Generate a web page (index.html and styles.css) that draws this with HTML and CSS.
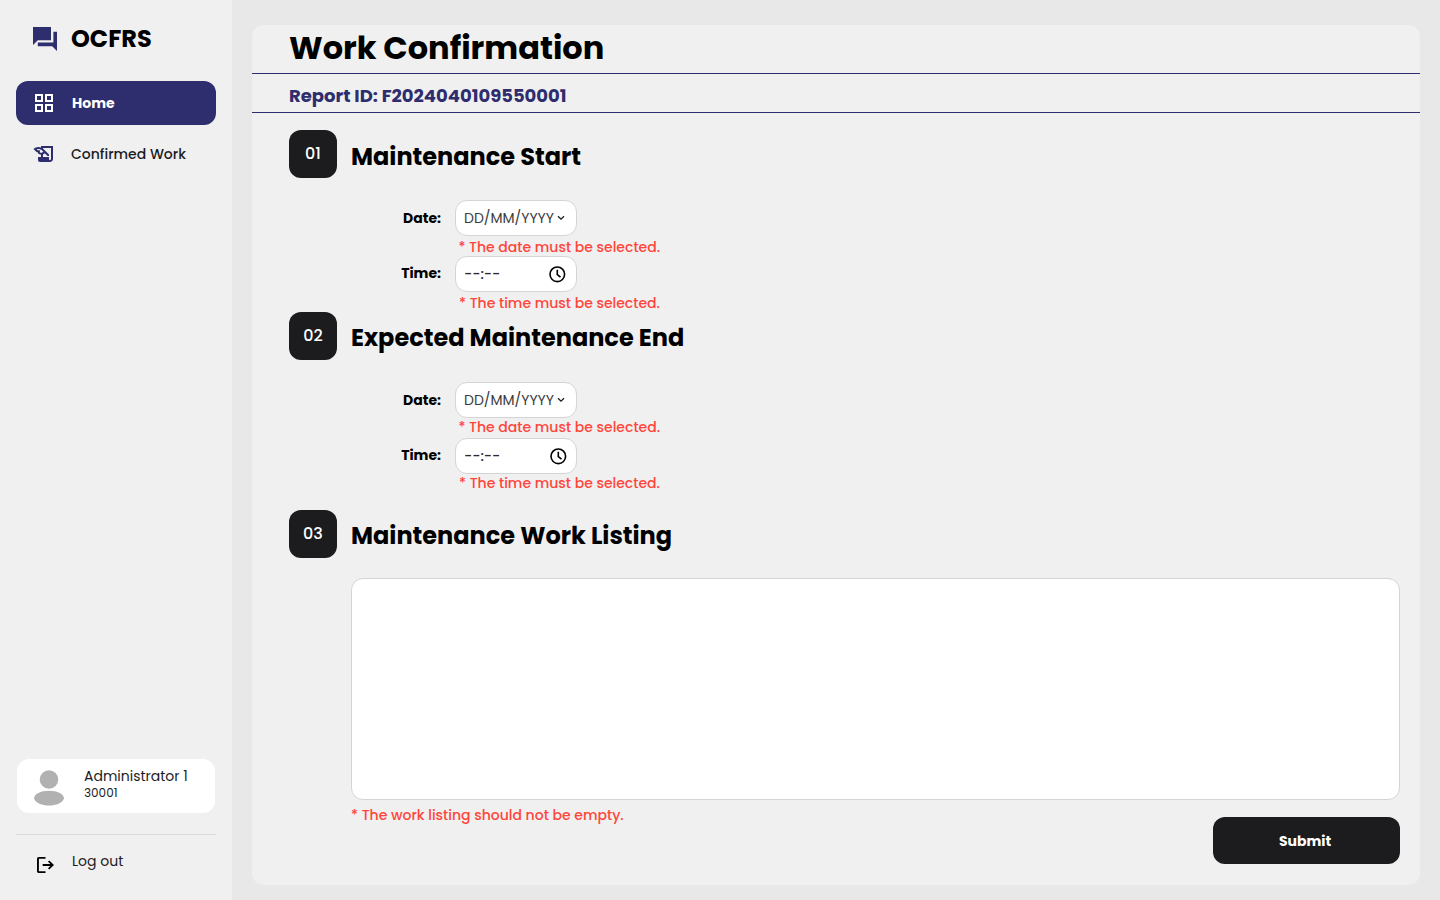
FILE: index.html
```html
<!DOCTYPE html>
<html lang="en">
<head>
<meta charset="utf-8">
<title>OCFRS - Work Confirmation</title>
<link rel="stylesheet" href="styles.css">
</head>
<body>
<div class="app">
  <aside class="sidebar">
    <div class="brand">
      <svg class="brand-icon" viewBox="2 2 20 20"><path d="M22 6h-3v9H6v3h12l4 4V6zM17 13V2H2v15l4-4h11z"/></svg>
      <span class="brand-name">OCFRS</span>
    </div>
    <nav class="nav">
      <a class="nav-item active">
        <svg class="grid-icon" viewBox="3 3 18 18"><path d="M3 3v8h8V3H3zm6 6H5V5h4v4zm-6 4v8h8v-8H3zm6 6H5v-4h4v4zm4-16v8h8V3h-8zm6 6h-4V5h4v4zm-6 4v8h8v-8h-8zm6 6h-4v-4h4v4z"/></svg>
        <span class="home-label">Home</span>
      </a>
      <a class="nav-item">
        <svg class="edu-icon" viewBox="0 0 24 24"><path d="M9 4v1.38c-.83-.33-1.72-.5-2.61-.5-1.79 0-3.58.68-4.95 2.05l3.33 3.33h1.11v1.11c.86.86 1.98 1.31 3.11 1.36V15H6v3c0 1.1.9 2 2 2h10c1.66 0 3-1.34 3-3V4H9zm-1.11 6.41V8.26H5.61L4.57 7.22a5.07 5.07 0 0 1 1.82-.34c1.34 0 2.59.52 3.54 1.46l1.41 1.41-.2.2a2.7 2.7 0 0 1-1.92.8c-.47 0-.93-.12-1.33-.34zM19 17c0 .55-.45 1-1 1s-1-.45-1-1v-2h-6v-2.59c.57-.23 1.1-.57 1.56-1.03l.2-.2L15.59 14H17v-1.41l-6-5.97V6h8v11z"/></svg>
        <span class="work-label">Confirmed Work</span>
      </a>
    </nav>
    <div class="user">
      <svg class="avatar" viewBox="0 0 30 36"><circle cx="15" cy="9.500" r="9.300"/><path d="M0 28.500C0 24 6.500 20.700 15 20.700S30 24 30 28.500C28.500 33 22 35.500 15 35.500S1.500 33 0 28.500z"/></svg>
      <div class="user-text">
        <span class="user-name">Administrator 1</span>
        <span class="user-id">30001</span>
      </div>
    </div>
    <div class="logout">
      <svg class="logout-icon" viewBox="3 3 18 18" preserveAspectRatio="none"><path d="M5 21q-.825 0-1.412-.587Q3 19.825 3 19V5q0-.825.588-1.413Q4.175 3 5 3h7v2H5v14h7v2Zm11-4-1.375-1.450 2.550-2.550H9v-2h8.175l-2.550-2.550L16 7l5 5Z"/></svg>
      <span class="logout-label">Log out</span>
    </div>
  </aside>
  <main class="card">
    <h1 class="title">Work Confirmation</h1>
    <div class="report"><span class="report-id">Report ID: F2024040109550001</span></div>
    <section class="section first">
      <header class="section-head"><span class="num">01</span><h2 class="heading h-start">Maintenance Start</h2></header>
      <div class="fields">
        <label class="label date-label">Date:</label>
        <div class="input"><span class="date-text">DD/MM/YYYY</span><svg class="chevron" viewBox="0 0 8 6"><path d="M1 1.200l3 3 3-3"/></svg></div>
        <p class="error date-error">* The date must be selected.</p>
        <label class="label time-label">Time:</label>
        <div class="input"><span class="time-text">--:--</span><svg class="clock" viewBox="0 0 18 18"><circle cx="9.300" cy="9.300" r="7.300"/><path d="M9.300 4.800V9.500l3.200 2.600"/></svg></div>
        <p class="error time-error">* The time must be selected.</p>
      </div>
    </section>
    <section class="section second">
      <header class="section-head"><span class="num">02</span><h2 class="heading h-end">Expected Maintenance End</h2></header>
      <div class="fields">
        <label class="label date-label">Date:</label>
        <div class="input"><span class="date-text">DD/MM/YYYY</span><svg class="chevron" viewBox="0 0 8 6"><path d="M1 1.200l3 3 3-3"/></svg></div>
        <p class="error date-error">* The date must be selected.</p>
        <label class="label time-label">Time:</label>
        <div class="input"><span class="time-text">--:--</span><svg class="clock" viewBox="0 0 18 18"><circle cx="9.300" cy="9.300" r="7.300"/><path d="M9.300 4.800V9.500l3.200 2.600"/></svg></div>
        <p class="error time-error">* The time must be selected.</p>
      </div>
    </section>
    <section class="section third">
      <header class="section-head"><span class="num">03</span><h2 class="heading h-list">Maintenance Work Listing</h2></header>
      <div class="listing"></div>
      <div class="actions">
        <p class="error list-error">* The work listing should not be empty.</p>
        <button class="submit"><span class="submit-label">Submit</span></button>
      </div>
    </section>
  </main>
</div>
</body>
</html>
```

FILE: styles.css
```css
* { box-sizing: border-box; }
body {
  margin: 0;
  background: #e8e8e8;
  color: #000;
  font-family: Poppins, Inter, "Open Sans", sans-serif;
  font-size: 14px;
  white-space: nowrap;
}
h1, h2, p { margin: 0; }
svg { display: block; flex: none; }
.app { display: flex; height: 900px; overflow: hidden; }

.sidebar {
  display: flex;
  flex-direction: column;
  width: 232px;
  padding: 0 16px;
  background: #f0f0f0;
}
.brand { display: flex; align-items: center; height: 78px; padding-left: 17px; gap: 14px; }
.brand-icon { width: 24px; height: 24px; fill: #2e2d6d; }
.brand-name { font-size: 24px; font-weight: 700; line-height: 36px; }
.nav { display: flex; flex-direction: column; gap: 7px; padding-top: 3px; }
.nav-item { display: flex; align-items: center; height: 44px; border-radius: 12px; color: #1c1c1e; font-weight: 500; }
.active { padding-left: 19px; gap: 19px; background: #2e2d6d; color: #fff; font-weight: 700; }
.nav-item:not(.active) { padding-left: 16px; gap: 15px; }
.grid-icon { width: 18px; height: 18px; fill: #fff; }
.edu-icon { width: 24px; height: 24px; fill: #2e2d6d; }
.user {
  display: flex;
  width: 198px;
  height: 54px;
  margin: auto 0 0 1px;
  padding-left: 17px;
  gap: 20px;
  border-radius: 12px;
  background: #fff;
  color: #1c1c1e;
}
.avatar { width: 30px; height: 36px; margin-top: 11px; fill: #b1b1b1; }
.user-text { display: flex; flex-direction: column; align-items: flex-start; padding-top: 8px; }
.user-name { line-height: 18px; }
.user-id { font-size: 12px; line-height: 16px; }
.logout {
  display: flex;
  height: 66px;
  margin-top: 21px;
  padding: 0 0 0 21px;
  gap: 18px;
  border-top: 1px solid #dcdcdc;
  color: #1c1c1e;
}
.logout-icon { width: 17px; height: 16px; margin-top: 22px; fill: #000; }
.logout-label { line-height: 20px; padding-top: 16px; }

.card {
  width: 1168px;
  height: 860px;
  margin: 25px 0 0 20px;
  border-radius: 12px;
  background: #f0f0f0;
}
.title {
  height: 49px;
  padding-left: 37px;
  border-bottom: 1px solid #2e2d6d;
  font-size: 32px;
  font-weight: 700;
  line-height: 46px;
}
.report {
  height: 39px;
  padding-left: 37px;
  border-bottom: 1px solid #2e2d6d;
  color: #2e2d6d;
  font-size: 18px;
  font-weight: 700;
  line-height: 44px;
}
.section { padding: 0 20px 0 37px; }
.first { height: 199px; padding-top: 17px; }
.second { height: 198px; }
.section-head { display: flex; height: 48px; gap: 14px; }
.num {
  width: 48px;
  height: 48px;
  border-radius: 12px;
  background: #1c1c1e;
  color: #fff;
  font-size: 16px;
  font-weight: 500;
  line-height: 47px;
  text-align: center;
}
.heading { font-size: 24px; font-weight: 700; line-height: 52px; }
.first .heading { line-height: 54px; }
.fields {
  display: grid;
  grid-template-columns: 152px 122px;
  grid-template-rows: 36px 20px 36px 20px;
  column-gap: 14px;
  margin-top: 22px;
}
.label { justify-self: end; font-weight: 700; line-height: 35px; }
.date-label { line-height: 37px; }
.input {
  display: flex;
  align-items: center;
  justify-content: space-between;
  height: 36px;
  padding: 0 10px 0 8px;
  border: 1px solid #d4d4d4;
  border-radius: 12px;
  background: #fff;
  color: #3c3c3e;
}
.time-text { font-weight: 500; color: #2c2c2e; }
.chevron { width: 8px; height: 6px; margin-right: 1px; fill: none; stroke: #1c1c1e; stroke-width: 1.300; }
.clock { width: 18px; height: 18px; fill: none; stroke: #000; stroke-width: 1.600; }
.second .clock { margin-right: -1px; }
.error { color: #ff453a; font-size: 14px; font-weight: 500; line-height: 22px; }
.date-error, .time-error { grid-column: 2; padding-left: 4px; }
.date-error { padding-left: 3.4px; }
.second .error { line-height: 18px; }
.listing {
  height: 222px;
  margin: 20px 0 0 62px;
  border: 1px solid #d4d4d4;
  border-radius: 12px;
  background: #fff;
}
.actions { display: flex; justify-content: space-between; padding-left: 62px; }
.list-error { line-height: 30px; }
.submit {
  width: 187px;
  height: 47px;
  margin-top: 17px;
  padding: 2px 3px 0 0;
  border: 0;
  border-radius: 12px;
  background: #1c1c1e;
  color: #fff;
  font: inherit;
  font-weight: 700;
}
```
